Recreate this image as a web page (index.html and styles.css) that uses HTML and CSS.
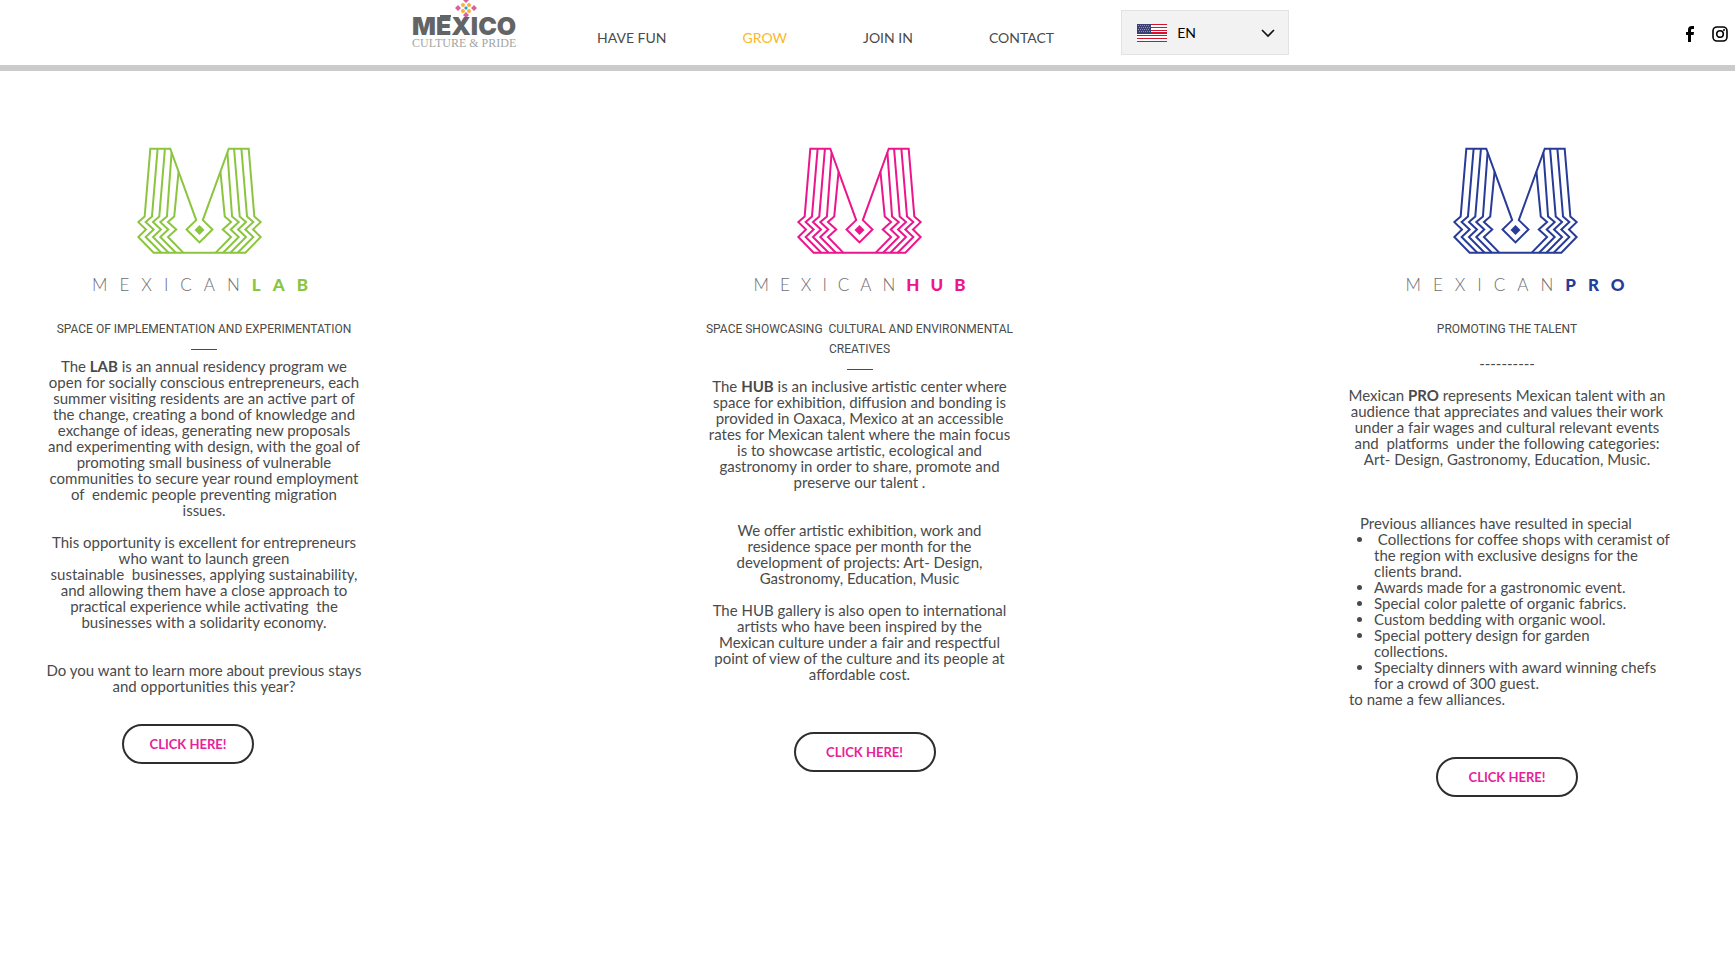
FILE: index.html
```
<!DOCTYPE html>
<html lang="en">
<head>
    <meta charset="UTF-8">
    <meta name="viewport" content="width=device-width, initial-scale=1.0">
    <title>Grow | México Culture &amp; Pride</title>
    <link rel="stylesheet" href="styles.css">
</head>
<body>

    <!-- Shared M mark, coloured by each program -->
    <svg class="sprite" aria-hidden="true">
        <symbol id="mark" viewBox="170 48 380 328">
            <g fill="none" stroke="currentColor" stroke-width="6">
                <path d="M212 56H272L350 271L321 299L360 338L399 299L370 271L448 56H508L525 260L544 277L521 299L544 322L498 369H222L176 322L199 299L176 277L195 260Z"/>
                <g id="feathers">
                    <path d="M234 56L217 260L198 277L222 299L198 322L245 369"/>
                    <path d="M256 56L239 260L220 277L244 299L220 322L267 369"/>
                    <path d="M276 68L262 260L242 277L266 299L242 322L289 369"/>
                    <path d="M297 125L284 260L265 277L290 299L265 322L311 369"/>
                </g>
                <use href="#feathers" transform="translate(720 0) scale(-1 1)"/>
            </g>
            <path d="M360 286L375 301L360 316L345 301Z" fill="currentColor"/>
        </symbol>
    </svg>

    <header class="header">
        <a class="brand" href="#" aria-label="México Culture &amp; Pride">
            <svg width="110" height="50" viewBox="0 0 110 50">
                <g fill="#d9629b">
                    <path d="M54 -3l3 3-3 3-3-3zM46 5l3 3-3 3-3-3zM62 5l3 3-3 3-3-3zM54 12l3 3-3 3-3-3z"/>
                </g>
                <g fill="#fbb03b">
                    <circle cx="51" cy="5" r="2"/><circle cx="57" cy="5" r="2"/>
                    <circle cx="51" cy="11" r="2"/><circle cx="57" cy="11" r="2"/>
                </g>
                <path d="M54 6l2 2-2 2-2-2z" fill="#25a9c9"/>
                <path d="M28 15h11v2h-11z" fill="#636466"/>
                <text class="brand-name" x="0" y="35">MEXICO</text>
                <text class="brand-tag" x="0" y="47">CULTURE &amp; PRIDE</text>
            </svg>
        </a>
        <nav class="nav">
            <a href="#">HAVE FUN</a>
            <a class="active" href="#">GROW</a>
            <a href="#">JOIN IN</a>
            <a href="#">CONTACT</a>
        </nav>
        <div class="language">
            <svg class="flag" width="30" height="18" viewBox="0 0 30 18" aria-hidden="true" shape-rendering="crispEdges">
                <rect width="30" height="18" fill="#fff"/>
                <path d="M0 0h30v1H0zM0 3h30v1H0zM0 6h30v1H0zM0 8h30v2H0zM0 11h30v1H0zM0 14h30v1H0zM0 17h30v1H0z" fill="#d0142f"/>
                <rect width="14" height="10" fill="#3c3f72"/>
                <path d="M1 1.500h12M2 3.500h12M1 5.500h12M2 7.500h12" stroke="#8c8fb3" stroke-dasharray="1 1"/>
            </svg>
            <select aria-label="Language">
                <option>EN</option>
                <option>ES</option>
            </select>
            <svg class="chevron" width="14" height="9" viewBox="0 0 14 9" aria-hidden="true">
                <path d="M1 1l6 6 6-6" fill="none" stroke="#111" stroke-width="1.6"/>
            </svg>
        </div>
        <div class="social">
            <a href="#" aria-label="Facebook">
                <svg width="16" height="16" viewBox="0 0 16 16"><path d="M6 16V9H4V6h2V4c0-2.600 1.300-4 3.800-4H12v3h-1.500C9.500 3 9 3.400 9 4.300V6h3l-.4 3H9v7z"/></svg>
            </a>
            <a href="#" aria-label="Instagram">
                <svg width="16" height="16" viewBox="0 0 16 16">
                    <rect x="1" y="1" width="14" height="14" rx="4" fill="none" stroke="#000" stroke-width="1.600"/>
                    <circle cx="8" cy="8" r="3.300" fill="none" stroke="#000" stroke-width="1.600"/>
                    <circle cx="12" cy="4" r="1"/>
                </svg>
            </a>
        </div>
    </header>

    <main class="programs">
        <section class="program lab">
            <div class="logo">
                <svg class="mark" aria-hidden="true"><use href="#mark"/></svg>
                <div class="logo-text">MEXICAN<b>LAB</b></div>
            </div>
            <h2>SPACE OF IMPLEMENTATION AND EXPERIMENTATION</h2>
            <hr>
            <p>The <b>LAB</b> is an annual residency program we<br>
            open for socially conscious entrepreneurs, each<br>
            summer visiting residents are an active part of<br>
            the change, creating a bond of knowledge and<br>
            exchange of ideas, generating new proposals<br>
            and experimenting with design, with the goal of<br>
            promoting small business of vulnerable<br>
            communities to secure year round employment<br>
            of&nbsp; endemic people preventing migration<br>
            issues.</p>
            <p>This opportunity is excellent for entrepreneurs<br>
            who want to launch green<br>
            sustainable&nbsp; businesses, applying sustainability,<br>
            and allowing them have a close approach to<br>
            practical experience while activating&nbsp; the<br>
            businesses with a solidarity economy.</p>
            <p class="spaced">Do you want to learn more about previous stays<br>
            and opportunities this year?</p>
            <button type="button">CLICK HERE!</button>
        </section>

        <section class="program hub">
            <div class="logo">
                <svg class="mark" aria-hidden="true"><use href="#mark"/></svg>
                <div class="logo-text">MEXICAN<b>HUB</b></div>
            </div>
            <h2>SPACE SHOWCASING&nbsp; CULTURAL AND ENVIRONMENTAL<br>CREATIVES</h2>
            <hr>
            <p>The <b>HUB</b> is an inclusive artistic center where<br>
            space for exhibition, diffusion and bonding is<br>
            provided in Oaxaca, Mexico at an accessible<br>
            rates for Mexican talent where the main focus<br>
            is to showcase artistic, ecological and<br>
            gastronomy in order to share, promote and<br>
            preserve our talent .</p>
            <p class="spaced">We offer artistic exhibition, work and<br>
            residence space per month for the<br>
            development of projects: Art- Design,<br>
            Gastronomy, Education, Music</p>
            <p>The HUB gallery is also open to international<br>
            artists who have been inspired by the<br>
            Mexican culture under a fair and respectful<br>
            point of view of the culture and its people at<br>
            affordable cost.</p>
            <button type="button">CLICK HERE!</button>
        </section>

        <section class="program pro">
            <div class="logo">
                <svg class="mark" aria-hidden="true"><use href="#mark"/></svg>
                <div class="logo-text">MEXICAN<b>PRO</b></div>
            </div>
            <h2>PROMOTING THE TALENT</h2>
            <p class="dashes">----------</p>
            <p>Mexican <b>PRO</b> represents Mexican talent with an<br>
            audience that appreciates and values their work<br>
            under a fair wages and cultural relevant events<br>
            and&nbsp; platforms&nbsp; under the following categories:<br>
            Art- Design, Gastronomy, Education, Music.</p>
            <div class="alliances">
                <p class="intro">Previous alliances have resulted in special</p>
                <ul>
                    <li>&nbsp;Collections for coffee shops with ceramist of<br>
                    the region with exclusive designs for the<br>
                    clients brand.</li>
                    <li>Awards made for a gastronomic event.</li>
                    <li>Special color palette of organic fabrics.</li>
                    <li>Custom bedding with organic wool.</li>
                    <li>Special pottery design for garden<br>collections.</li>
                    <li>Specialty dinners with award winning chefs<br>
                    for a crowd of 300 guest.</li>
                </ul>
                <p>to name a few alliances.</p>
            </div>
            <button type="button">CLICK HERE!</button>
        </section>
    </main>

</body>
</html>
```
FILE: styles.css
```
* {
    box-sizing: border-box;
}
body {
    margin: 0;
    background-color: #fff;
    color: #4a4a4a;
    font-family: Lato, "Open Sans", sans-serif;
    font-size: 15px;
    line-height: 16px;
}
.sprite {
    display: none;
}

/* Header */
.header {
    display: flex;
    align-items: flex-start;
    padding: 0 7px 0 23.750%;
    height: 71px;
    border-bottom: 6px solid #cbcbcb;
}
.brand {
    display: block;
    margin-right: 75px;
}
.brand svg {
    display: block;
}
.brand-name {
    font-family: Inter, sans-serif;
    font-size: 25px;
    font-weight: 900;
    fill: #636466;
}
.brand-tag {
    font-family: "Liberation Serif", serif;
    font-size: 12px;
    fill: #a3a5a5;
}
.nav {
    display: flex;
    gap: 76px;
    padding-top: 30px;
    margin-right: 67px;
    font-size: 14px;
    white-space: nowrap;
}
.nav a {
    color: #4a4a4a;
    text-decoration: none;
}
.nav a.active {
    color: #fbb829;
}
.language {
    position: relative;
    width: 168px;
    margin-top: 10px;
}
.language select {
    display: block;
    appearance: none;
    width: 100%;
    height: 45px;
    padding: 0 40px 0 55px;
    border: 1px solid #e3e3e3;
    border-radius: 0;
    background-color: #f2f2f2;
    color: #000;
    font-family: inherit;
    font-size: 14px;
}
.flag {
    position: absolute;
    top: 14px;
    left: 16px;
}
.chevron {
    position: absolute;
    top: 19px;
    right: 14px;
}
.social {
    display: flex;
    gap: 14px;
    margin-left: auto;
    padding-top: 26px;
}
.social svg {
    display: block;
}

/* Programs */
.programs {
    display: grid;
    grid-template-columns: 408fr 903fr 392fr;
    padding: 75px 32px 80px 0;
}
.program {
    display: flex;
    flex-direction: column;
    align-items: center;
    text-align: center;
    white-space: nowrap;
}
.logo {
    display: flex;
    flex-direction: column;
    align-items: center;
    margin-bottom: 24px;
}
.lab .logo {
    margin-right: 8px;
}
.pro .logo {
    margin-left: 16px;
}
.mark {
    width: 127px;
    height: 109px;
}
.logo-text {
    margin-top: 20px;
    padding-left: 12px;
    color: #6d6e70;
    font-size: 17px;
    font-weight: 300;
    line-height: 20px;
    letter-spacing: 12px;
}
.hub .logo-text {
    padding-left: 11px;
    letter-spacing: 11px;
}
.logo-text b {
    font-weight: 900;
}
.lab .mark, .lab .logo-text b {
    color: #8bc540;
}
.hub .mark, .hub .logo-text b {
    color: #ec168c;
}
.pro .mark, .pro .logo-text b {
    color: #283b97;
}
h2 {
    margin: 0;
    font-family: Roboto, sans-serif;
    font-size: 12px;
    font-weight: normal;
    line-height: 20px;
}
hr {
    width: 26px;
    margin: 10px 0 8px;
    border: 0;
    border-top: 1px solid #4a4a4a;
}
p {
    margin: 0 0 16px;
}
p.spaced {
    margin-top: 16px;
}
.dashes {
    margin: 16px 0;
}
.alliances {
    margin-top: 32px;
    width: 316px;
    text-align: left;
}
.alliances p {
    margin: 0;
}
.alliances .intro {
    padding-left: 11px;
}
.alliances ul {
    margin: 0;
    padding-left: 25px;
}
.program button {
    width: 142px;
    height: 40px;
    margin-top: 34px;
    border: 2px solid #2f2e2e;
    border-radius: 20px;
    background-color: #fff;
    color: #e8219a;
    font-family: inherit;
    font-size: 13px;
    font-weight: bold;
    cursor: pointer;
}
.hub button {
    margin-left: 10px;
}
.lab button {
    width: 132px;
    margin-top: 14px;
    margin-right: 32px;
}
.pro button {
    margin-top: 50px;
}
```
